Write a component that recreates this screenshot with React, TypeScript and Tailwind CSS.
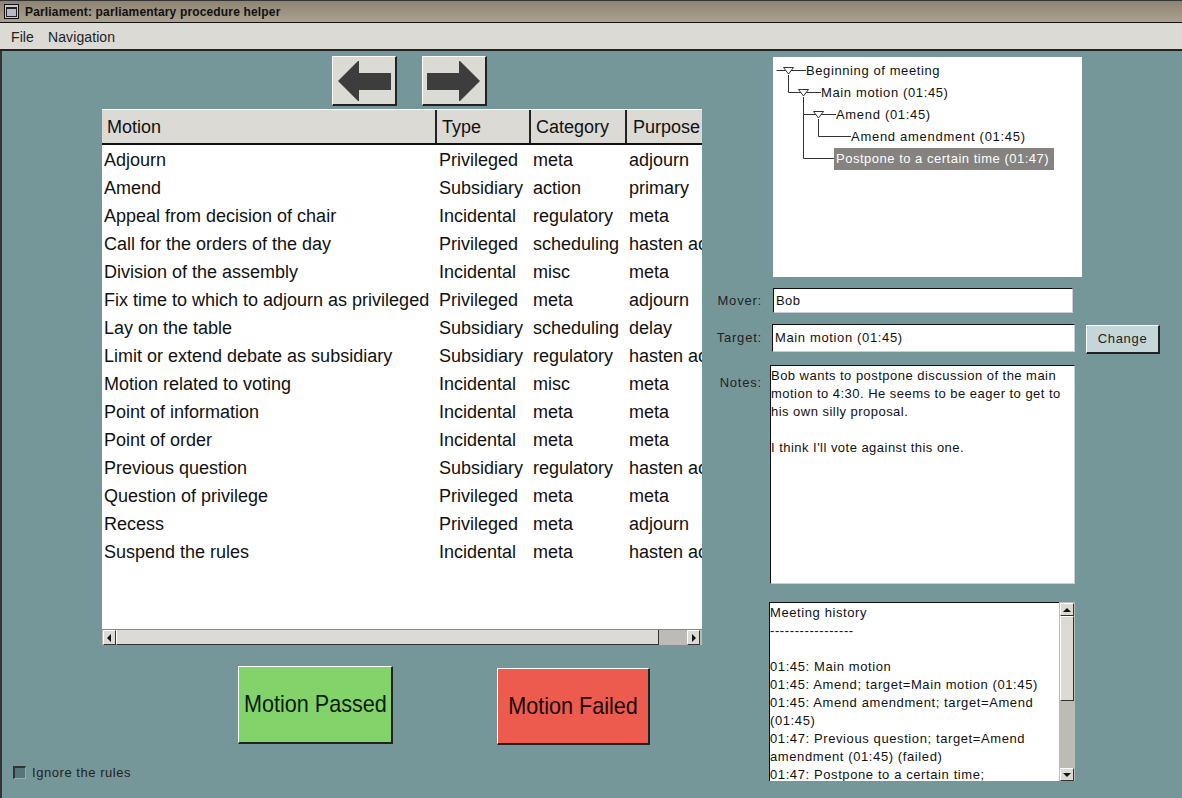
import React from "react";

const FONT = "font-['Liberation_Sans',Arial,sans-serif]";

const motions = [
  ["Adjourn", "Privileged", "meta", "adjourn"],
  ["Amend", "Subsidiary", "action", "primary"],
  ["Appeal from decision of chair", "Incidental", "regulatory", "meta"],
  ["Call for the orders of the day", "Privileged", "scheduling", "hasten ac"],
  ["Division of the assembly", "Incidental", "misc", "meta"],
  ["Fix time to which to adjourn as privileged", "Privileged", "meta", "adjourn"],
  ["Lay on the table", "Subsidiary", "scheduling", "delay"],
  ["Limit or extend debate as subsidiary", "Subsidiary", "regulatory", "hasten ac"],
  ["Motion related to voting", "Incidental", "misc", "meta"],
  ["Point of information", "Incidental", "meta", "meta"],
  ["Point of order", "Incidental", "meta", "meta"],
  ["Previous question", "Subsidiary", "regulatory", "hasten ac"],
  ["Question of privilege", "Privileged", "meta", "meta"],
  ["Recess", "Privileged", "meta", "adjourn"],
  ["Suspend the rules", "Incidental", "meta", "hasten ac"],
];

const history = [
  "Meeting history",
  "-----------------",
  "\u00a0",
  "01:45: Main motion",
  "01:45: Amend; target=Main motion (01:45)",
  "01:45: Amend amendment; target=Amend (01:45)",
  "01:47: Previous question; target=Amend amendment (01:45) (failed)",
  "01:47: Postpone to a certain time;",
];

const tree = [
  { label: "Beginning of meeting", cls: "pl-[33px] tracking-[0.6px]" },
  { label: "Main motion (01:45)", cls: "pl-[48px] tracking-[0.63px]" },
  { label: "Amend (01:45)", cls: "pl-[63px] tracking-[0.68px]" },
  { label: "Amend amendment (01:45)", cls: "pl-[78px] tracking-[0.72px]" },
];

const raised = "border-t border-l border-t-white border-l-white border-r-2 border-b-2 border-r-[#222] border-b-[#222]";
const sunken = "bg-white border-t border-l border-t-[#111] border-l-[#111] border-r border-b border-r-[#ccd] border-b-[#ccd]";

function ArrowButton({ dir }: { dir: "left" | "right" }) {
  return (
    <div className={`w-[65px] h-[50px] bg-[#dcdad5] flex items-center justify-center ${raised}`}>
      <svg width="54" height="42" viewBox="0 0 54 42">
        {dir === "left" ? (
          <path d="M1 21 L21 1 H22 V13 H54 V30 H22 V41 H21 Z" fill="#3d3d3d" />
        ) : (
          <path d="M53 21 L33 1 H32 V13 H0 V30 H32 V41 H33 Z" fill="#3d3d3d" />
        )}
      </svg>
    </div>
  );
}

function ScrollArrow({ dir }: { dir: "left" | "right" | "up" | "down" }) {
  const points = {
    left: "6,1 6,9 2,5",
    right: "3,1 3,9 7,5",
    up: "1,7 9,7 5,3",
    down: "1,3 9,3 5,7",
  }[dir];
  const size = dir === "left" || dir === "right" ? "w-[13px] h-[15px]" : "w-[14px] h-[13px]";
  return (
    <div className={`${size} bg-[#dcdad5] flex items-center justify-center shrink-0 border-r border-b border-r-[#333] border-b-[#333] border-t border-l border-t-white border-l-white`}>
      <svg width="10" height="10" viewBox="0 0 10 10">
        <polygon points={points} fill="#111" />
      </svg>
    </div>
  );
}

function MotionTable() {
  return (
    <div className="w-[600px] h-[536px] bg-white flex flex-col border-t border-t-white">
      <div className="h-[35px] shrink-0 flex bg-[#dcdad5] border-b-2 border-b-[#111] text-[18px] text-[#111] leading-[34px]">
        <div className="w-[335px] shrink-0 pl-[5px] border-r-2 border-r-[#222]">Motion</div>
        <div className="w-[94px] shrink-0 pl-[5px] border-r-2 border-r-[#222]">Type</div>
        <div className="w-[96px] shrink-0 pl-[5px] border-r-2 border-r-[#222]">Category</div>
        <div className="flex-1 min-w-0 pl-[6px] whitespace-nowrap overflow-hidden">Purpose</div>
      </div>
      <div className="flex-1 pt-[1px] text-[18px] leading-[28px] text-[#111]">
        {motions.map((m) => (
          <div key={m[0]} className="flex h-[28px]">
            <div className="w-[335px] shrink-0 pl-[2px] whitespace-nowrap">{m[0]}</div>
            <div className="w-[94px] shrink-0 pl-[2px] whitespace-nowrap">{m[1]}</div>
            <div className="w-[96px] shrink-0 pl-[2px] whitespace-nowrap">{m[2]}</div>
            <div className="flex-1 min-w-0 pl-[2px] whitespace-nowrap overflow-hidden">{m[3]}</div>
          </div>
        ))}
      </div>
      <div className="h-[16px] shrink-0 flex items-start bg-[#bdbbb6] border-t border-t-[#888]">
        <div className="ml-[1px]">
          <ScrollArrow dir="left" />
        </div>
        <div className="w-[543px] h-[15px] bg-[#dcdad5] border-r border-b border-r-[#333] border-b-[#333] border-l border-l-white" />
        <div className="flex-1" />
        <div className="mr-[2px]">
          <ScrollArrow dir="right" />
        </div>
      </div>
    </div>
  );
}

function MeetingTree() {
  return (
    <div className="relative ml-[71px] mt-[1px] w-[309px] h-[220px] bg-white pt-[3px]">
      <svg className="absolute left-0 top-0" width="100" height="110" viewBox="0 0 100 110" fill="none" stroke="#333" strokeWidth="1">
        <path d="M3.5 13.5 H33 M15.5 18 V35.5 H48 M30.5 40 V101.5 H62 M30.5 57.5 H63 M45.5 62 V79.5 H78" />
        <polygon points="10.5,10.5 20.5,10.5 15.5,17" fill="#fff" />
        <polygon points="25.5,32.5 35.5,32.5 30.5,39" fill="#fff" />
        <polygon points="40.5,54.5 50.5,54.5 45.5,61" fill="#fff" />
      </svg>
      {tree.map((t) => (
        <div key={t.label} className={`relative h-[22px] leading-[22px] whitespace-nowrap ${t.cls}`}>
          {t.label}
        </div>
      ))}
      <div className="relative h-[22px] leading-[22px] ml-[61px] w-[220px] pl-[2px] tracking-[0.51px] bg-[#858280] text-white whitespace-nowrap">
        Postpone to a certain time (01:47)
      </div>
    </div>
  );
}

function Scrollbar() {
  return (
    <div className="w-[16px] h-[179px] shrink-0 bg-[#bdbbb6] flex flex-col items-center pt-[1px]">
      <ScrollArrow dir="up" />
      <div className="w-[14px] h-[85px] bg-[#dcdad5] border-b border-r border-b-[#333] border-r-[#333] border-t border-l border-t-white border-l-white" />
      <div className="flex-1" />
      <ScrollArrow dir="down" />
    </div>
  );
}

export default function App() {
  return (
    <div className={`w-[1182px] h-[798px] flex flex-col overflow-hidden bg-[#76979a] ${FONT}`}>
      <div className="h-[23px] shrink-0 flex items-center gap-[6px] pl-[4px] bg-gradient-to-b from-[#8e8473] to-[#aaa18f] border-b border-b-[#111] border-t border-t-[#333]">
        <div className="w-[15px] h-[15px] border border-[#111] bg-[#c9c7c2] flex items-center justify-center">
          <div className="w-[11px] h-[10px] border border-t-2 border-[#222] bg-[#b9b9c9]" />
        </div>
        <span className="text-[12px] font-bold tracking-[0.16px] text-[#111] whitespace-nowrap">Parliament: parliamentary procedure helper</span>
      </div>
      <div className="h-[28px] shrink-0 flex items-center gap-[14px] pl-[11px] pt-[2px] bg-[#dcdad5] border-b-2 border-b-[#222] text-[14px] tracking-[0.1px] text-[#222]">
        <span>File</span>
        <span>Navigation</span>
      </div>
      <div className="flex-1 flex border-l-2 border-l-[#333]">
        <div className="w-[700px] shrink-0 flex flex-col">
          <div className="flex ml-[330px] mt-[5px] gap-[25px]">
            <ArrowButton dir="left" />
            <ArrowButton dir="right" />
          </div>
          <div className="ml-[100px] mt-[3px]">
            <MotionTable />
          </div>
          <div className="flex items-start ml-[236px] mt-[21px]">
            <div className={`w-[155px] h-[78px] pb-[2px] bg-[#82d46a] flex items-center justify-center text-[24px] text-[#0a1a05] whitespace-nowrap ${raised}`}>
              <span className="scale-x-[0.9]">Motion Passed</span>
            </div>
            <div className={`ml-[104px] mt-[2px] w-[153px] h-[77px] pl-[1px] bg-[#ec5b4e] flex items-center justify-center text-[24px] text-[#1a0505] whitespace-nowrap ${raised}`}>
              <span className="scale-x-[0.9]">Motion Failed</span>
            </div>
          </div>
          <div className="flex items-center ml-[11px] mt-[18px] gap-[6px] text-[13px] tracking-[0.55px] text-[#222]">
            <div className="w-[13px] h-[13px] bg-[#55777a] border-t-2 border-l-2 border-t-[#333] border-l-[#333] border-r border-b border-r-[#9ab] border-b-[#9ab]" />
            <span>Ignore the rules</span>
          </div>
        </div>
        <div className="flex-1 flex flex-col pt-[5px] text-[13px] text-[#111]">
          <MeetingTree />
          <div className="flex items-center mt-[11px]">
            <span className="w-[60px] text-right tracking-[0.8px] text-[#222]">Mover:</span>
            <div className={`ml-[11px] w-[300px] h-[25px] pl-[2px] leading-[23px] tracking-[0.45px] ${sunken}`}>Bob</div>
          </div>
          <div className="flex items-start mt-[11px]">
            <span className="w-[60px] mt-[4px] text-right tracking-[0.8px] text-[#222]">Target:</span>
            <div className={`ml-[10px] w-[303px] h-[28px] pl-[2px] leading-[26px] tracking-[0.64px] ${sunken}`}>Main motion (01:45)</div>
            <div className={`ml-[11px] mt-[1px] w-[74px] h-[29px] bg-[#c5d6d8] flex items-center justify-center tracking-[0.7px] text-[#222] ${raised} border-r border-b`}>Change</div>
          </div>
          <div className="flex items-start mt-[11px]">
            <span className="w-[60px] text-right tracking-[0.8px] text-[#222] mt-[8px]">Notes:</span>
            <div className={`ml-[8px] w-[305px] h-[219px] pt-[1px] leading-[18px] tracking-[0.47px] ${sunken}`}>
              <p>Bob wants to postpone discussion of the main motion to 4:30. He seems to be eager to get to his own silly proposal.</p>
              <p className="mt-[18px]">I think I'll vote against this one.</p>
            </div>
          </div>
          <div className="flex items-start mt-[18px] ml-[67px]">
            <div className="w-[290px] h-[179px] overflow-hidden pt-[1px] leading-[18px] tracking-[0.6px] bg-white border-t border-l border-t-[#111] border-l-[#111]">
              {history.map((line, i) => (
                <div key={i}>{line}</div>
              ))}
            </div>
            <Scrollbar />
          </div>
        </div>
      </div>
    </div>
  );
}
